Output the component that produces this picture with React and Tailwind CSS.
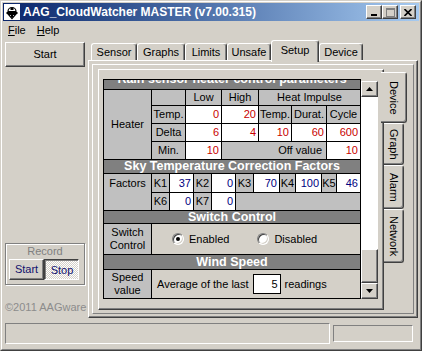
import React from 'react';

const raised = 'border border-t-white border-l-white border-r-[#404040] border-b-[#404040] shadow-[inset_-1px_-1px_0_#808080,inset_1px_1px_0_#d4d0c8]';
const pressed = 'border border-t-[#404040] border-l-[#404040] border-r-white border-b-white shadow-[inset_1px_1px_0_#808080]';
const sunkenThin = 'border border-t-[#808080] border-l-[#808080] border-r-white border-b-white';

const head = 'bg-[#808080] text-white font-bold text-[12.5px] flex items-center justify-center whitespace-nowrap';
const lbl = 'bg-[#c0c0c0] flex items-center justify-center whitespace-nowrap';
const red = 'bg-white text-[#c80000] flex items-center justify-end pr-[2px]';
const navy = 'bg-white text-[#000080] flex items-center justify-end pr-[2px]';

const AppIcon = () => (
    <svg width="16" height="16" viewBox="0 0 16 16">
        <rect x="0" y="0" width="16" height="16" fill="#fff" />
        <path d="M4 7.5 A4 4 0 0 1 12 7.5 Z" fill="#fff" stroke="#000" strokeWidth="1.2" />
        <rect x="6.5" y="4" width="3" height="2" fill="#000" />
        <rect x="2.5" y="8" width="11" height="2" fill="#000" />
        <path d="M4.5 10.5 L11.5 10.5 L8 14.5 Z" fill="#fff" stroke="#000" strokeWidth="1.2" />
        <rect x="7" y="11" width="2" height="2" fill="#000" />
    </svg>
);

const CaptionButton = ({ children, className = '' }) => (
    <div className={`w-[16px] h-[14px] bg-[#d4d0c8] flex items-center justify-center ${raised} ${className}`}>
        {children}
    </div>
);

const TitleBar = () => (
    <div className="h-[18px] flex items-center bg-linear-to-r from-[#0a246a] to-[#a6caf0] pl-[1px] pr-[3px]">
        <AppIcon />
        <span className="ml-[3px] text-white font-bold text-[12px] whitespace-nowrap">AAG_CloudWatcher MASTER (v7.00.315)</span>
        <div className="ml-auto flex items-center">
            <CaptionButton>
                <svg width="8" height="8" viewBox="0 0 8 8"><rect x="1" y="6" width="6" height="2" fill="#000" /></svg>
            </CaptionButton>
            <CaptionButton>
                <svg width="9" height="9" viewBox="0 0 9 9"><rect x="0.5" y="0.5" width="8" height="8" fill="none" stroke="#808080" /><rect x="0" y="0" width="9" height="2" fill="#808080" /></svg>
            </CaptionButton>
            <CaptionButton className="ml-[2px]">
                <svg width="8" height="7" viewBox="0 0 8 7"><path d="M0.5 0 L7.5 7 M7.5 0 L0.5 7" stroke="#000" strokeWidth="1.6" /></svg>
            </CaptionButton>
        </div>
    </div>
);

const MenuBar = () => (
    <div className="h-[18px] flex items-center gap-[1px] text-[11px]">
        <span className="px-[5px]"><span className="underline">F</span>ile</span>
        <span className="px-[5px]"><span className="underline">H</span>elp</span>
    </div>
);

const LeftColumn = () => (
    <div className="w-[80px] ml-[2px] flex flex-col pt-[3px]">
        <div className={`h-[25px] flex items-center justify-center ${raised}`}>Start</div>
        <div className="mt-[176px] h-[42px] border border-[#808080] shadow-[inset_1px_1px_0_#fff,1px_1px_0_#fff] px-[3px] flex flex-col">
            <div className="h-[15px] text-[#808080] text-center leading-[15px]">Record</div>
            <div className="flex">
                <div className={`w-[35px] h-[21px] flex items-center justify-center text-[#10106e] ${raised}`}>Start</div>
                <div className={`w-[35px] h-[21px] flex items-center justify-center text-[#10106e] bg-[repeating-conic-gradient(#fff_0_25%,#d4d0c8_0_50%)] bg-[length:2px_2px] ${pressed}`}>
                    <span className="pt-[2px] pl-[1px]">Stop</span>
                </div>
            </div>
        </div>
        <div className="mt-[14px] text-[#8c8c8c] whitespace-nowrap">©2011 AAGware</div>
    </div>
);

const HTab = ({ label, width, selected }) => (
    <div
        className={`${width} flex items-center justify-center border-t border-l border-r border-t-white border-l-white border-r-[#404040] shadow-[inset_-1px_0_0_#808080] rounded-t-[3px] bg-[#d4d0c8] ${selected ? 'h-[22px] -mb-[2px] relative z-10 pb-[3px]' : 'h-[17px]'}`}
    >
        {label}
    </div>
);

const VTab = ({ label, height, selected }) => (
    <div
        className={`${height} flex items-center justify-center border-t border-r border-b border-t-white border-r-[#404040] border-b-[#404040] shadow-[inset_-1px_-1px_0_#808080] rounded-r-[3px] bg-[#d4d0c8] ${selected ? 'w-[26px] -ml-[3px] relative z-10' : 'w-[20px]'}`}
    >
        <span className="[writing-mode:vertical-rl] whitespace-nowrap">{label}</span>
    </div>
);

const Radio = ({ checked }) => (
    <span className="w-[12px] h-[12px] rounded-full bg-white border border-t-[#808080] border-l-[#808080] border-r-white border-b-white shadow-[inset_1px_1px_0_#404040,inset_-1px_-1px_0_#d4d0c8] flex items-center justify-center">
        {checked && <span className="w-[4px] h-[4px] rounded-full bg-black" />}
    </span>
);

const Arrow = ({ up }) => (
    <svg width="7" height="4" viewBox="0 0 7 4">
        <path d={up ? 'M3.5 0 L7 4 L0 4 Z' : 'M0 0 L7 0 L3.5 4 Z'} fill="#000" />
    </svg>
);

const ScrollBar = () => (
    <div className="w-[17px] h-[218px] mt-[2px] flex flex-col bg-white">
        <div className={`h-[16px] bg-[#d4d0c8] flex items-center justify-center ${raised}`}><Arrow up /></div>
        <div className="flex-1" />
        <div className={`h-[34px] bg-[#d4d0c8] ${raised}`} />
        <div className={`h-[16px] bg-[#d4d0c8] flex items-center justify-center ${raised}`}><Arrow /></div>
    </div>
);

const SettingsTable = () => (
    <div className="w-[258px] h-[220px] border border-black overflow-hidden bg-black">
        {/* scrolled to the bottom: the first header is partly hidden */}
        <div className="-mt-[4px] flex flex-col gap-px bg-black">
            <div className="grid grid-cols-[47px_33px_35px_36px_32px_34px_33px] grid-rows-[13px_15px_17px_17px_17px] gap-px">
                <div className={`${head} col-span-7 overflow-hidden`}>
                    <span className="-translate-y-[3px]">Rain sensor heater control parameters</span>
                </div>
                <div className={`${lbl} row-span-4`}>Heater</div>
                <div className={lbl} />
                <div className={lbl}>Low</div>
                <div className={lbl}>High</div>
                <div className={`${lbl} col-span-3`}>Heat Impulse</div>

                <div className={lbl}>Temp.</div>
                <div className={red}>0</div>
                <div className={red}>20</div>
                <div className={lbl}>Temp.</div>
                <div className={lbl}>Durat.</div>
                <div className={lbl}>Cycle</div>

                <div className={lbl}>Delta</div>
                <div className={red}>6</div>
                <div className={red}>4</div>
                <div className={red}>10</div>
                <div className={red}>60</div>
                <div className={red}>600</div>

                <div className={lbl}>Min.</div>
                <div className={red}>10</div>
                <div className={`${lbl} col-span-3 justify-end pr-[4px]`}>Off value</div>
                <div className={red}>10</div>
            </div>

            <div className="grid grid-cols-[47px_17px_23px_17px_23px_17px_25px_15px_25px_14px_23px] grid-rows-[13px_18px_17px] gap-px">
                <div className={`${head} col-span-11`}>Sky Temperature Correction Factors</div>
                <div className="bg-[#c0c0c0] row-span-2 text-center pt-[1px]">Factors</div>
                <div className={lbl}>K1</div>
                <div className={navy}>37</div>
                <div className={lbl}>K2</div>
                <div className={navy}>0</div>
                <div className={lbl}>K3</div>
                <div className={navy}>70</div>
                <div className={lbl}>K4</div>
                <div className={navy}>100</div>
                <div className={lbl}>K5</div>
                <div className={navy}>46</div>

                <div className={lbl}>K6</div>
                <div className={navy}>0</div>
                <div className={lbl}>K7</div>
                <div className={navy}>0</div>
                <div className={`${lbl} col-span-6`} />
            </div>

            <div className="grid grid-cols-[47px_208px] grid-rows-[12px_30px] gap-px">
                <div className={`${head} col-span-2`}>Switch Control</div>
                <div className={`${lbl} flex-col leading-[13px]`}>
                    <span>Switch</span>
                    <span>Control</span>
                </div>
                <div className="bg-[#d4d0c8] flex items-center">
                    <div className="ml-[20px] flex items-center gap-[5px]">
                        <Radio checked />
                        <span>Enabled</span>
                    </div>
                    <div className="ml-[28px] flex items-center gap-[5px]">
                        <Radio />
                        <span>Disabled</span>
                    </div>
                </div>
            </div>

            <div className="grid grid-cols-[47px_208px] grid-rows-[14px_28px] gap-px">
                <div className={`${head} col-span-2`}>Wind Speed</div>
                <div className={`${lbl} flex-col leading-[13px]`}>
                    <span>Speed</span>
                    <span>value</span>
                </div>
                <div className="bg-[#d4d0c8] flex items-center pl-[5px] whitespace-nowrap">
                    <span>Average of the last</span>
                    <div className="ml-[4px] w-[28px] h-[20px] bg-white border border-black flex items-center justify-end pr-[2px]">5</div>
                    <span className="ml-[4px]">readings</span>
                </div>
            </div>
        </div>
    </div>
);

const MainArea = () => (
    <div className="ml-[3px] w-[330px] flex flex-col">
        <div className="h-[21px] flex items-end pl-[3px]">
            <HTab label="Sensor" width="w-[46px]" />
            <HTab label="Graphs" width="w-[48px]" />
            <HTab label="Limits" width="w-[42px]" />
            <HTab label="Unsafe" width="w-[44px]" />
            <HTab label="Setup" width="w-[48px]" selected />
            <HTab label="Device" width="w-[44px]" />
        </div>
        <div className={`h-[258px] p-[3px] ${raised}`}>
            <div className="h-full border border-t-white border-l-white border-r-[#808080] border-b-[#808080] pl-[5px] pt-[4px] pr-[3px] pb-[3px] flex">
                <div className={`w-[286px] pl-[4px] pt-[9px] flex items-start ${raised}`}>
                    <SettingsTable />
                    <ScrollBar />
                </div>
                <div className="w-[24px] flex flex-col pt-[3px]">
                    <VTab label="Device" height="h-[51px]" selected />
                    <VTab label="Graph" height="h-[42px]" />
                    <VTab label="Alarm" height="h-[44px]" />
                    <VTab label="Network" height="h-[54px]" />
                </div>
            </div>
        </div>
    </div>
);

const StatusBar = () => (
    <div className="h-[24px] flex items-center">
        <div className={`ml-[2px] w-[325px] h-[21px] ${sunkenThin}`} />
        <div className={`ml-[3px] w-[80px] h-[17px] ${sunkenThin}`} />
    </div>
);

export default function App() {
    return (
        <div className="w-[422px] h-[351px] overflow-hidden bg-[#d4d0c8] border border-t-[#d4d0c8] border-l-[#d4d0c8] border-r-[#404040] border-b-[#404040] font-['Liberation_Sans',Arial,sans-serif] text-[11px] text-black select-none">
            <div className="w-full h-full border border-t-white border-l-white border-r-[#808080] border-b-[#808080] p-px flex flex-col">
                <TitleBar />
                <MenuBar />
                <div className="flex h-[282px]">
                    <LeftColumn />
                    <MainArea />
                </div>
                <StatusBar />
            </div>
        </div>
    );
}
